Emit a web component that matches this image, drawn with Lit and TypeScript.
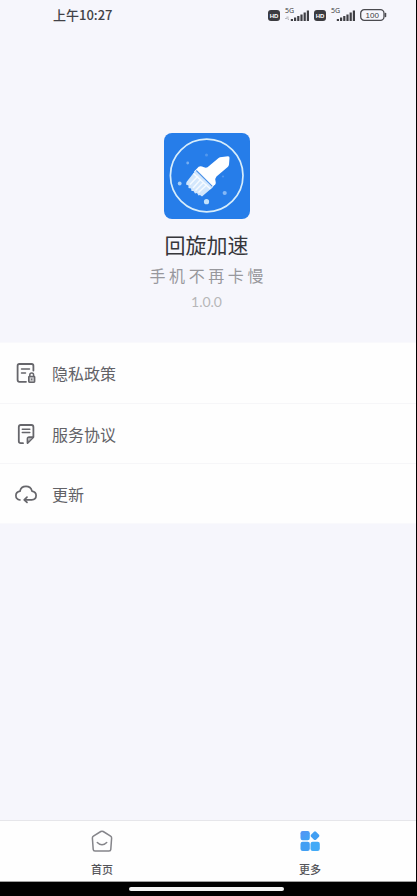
import { LitElement, html, css, svg } from "lit";
import { customElement } from "lit/decorators.js";

const hdBadge = html`
  <svg class="hd" viewBox="0 0 12 11" aria-label="HD">
    <rect width="12" height="11" rx="3" fill="#3b3b40" />
    <text x="6" y="8" text-anchor="middle" class="hd-text">HD</text>
  </svg>`;

const signalBars = (data: boolean) => html`
  <svg class="signal" viewBox="0 -3 24 20" aria-label="5G">
    <text x="0" y="5" class="net-text">5G</text>
    ${data
      ? svg`<path d="M0 10.500h2v-2M3 8.500v3h1" fill="none" stroke="#b5b5bb" stroke-width="0.900" />`
      : null}
    <path
      d="M6.900 13v-2M10.100 13v-3.500M13.300 13V8M16.500 13V6.500M19.700 13V4.500M22.900 13V2.500"
      fill="none" stroke="#3e3e43" stroke-width="2.200" />
  </svg>`;

const battery = html`
  <svg class="battery" viewBox="0 0 27 12" aria-label="100%">
    <rect x="0.700" y="0.700" width="23.300" height="10.600" rx="3.600" fill="none" stroke="#4a4a4f" stroke-width="1.300" />
    <path d="M25.500 4.500v3" stroke="#4a4a4f" stroke-width="1.500" stroke-linecap="round" />
    <text x="12.300" y="9" text-anchor="middle" class="battery-text">100</text>
  </svg>`;

const logo = html`
  <svg class="logo" viewBox="0 0 86 86" aria-hidden="true">
    <rect width="86" height="86" rx="8" fill="#267de9" />
    <circle cx="42.700" cy="42.500" r="36.300" fill="none" stroke="#d7edfb" stroke-width="1.700" />
    <path
      d="M56 24.200 64 23.300Q65.800 23.300 65.500 25L65 31.500Q64.700 33 63.700 34L52.500 43.500Q50.500 46 51.500 48Q52.500 51 50 52.500L47.500 55.500 30 38.500 33 35.500Q35 32.500 38 33.500L40 34.300Q43 35.500 45 33L54 25.500Q55 24.400 56 24.200Z"
      fill="#fff" />
    <path d="M31.500 37.500 48.500 54.500 38 63.500 36 62 34.500 62.500 33 60 31 60.500 29.500 58 27.500 58 27 55.500 24.500 55 24.500 52.500 22 51.500 22.500 49Z" fill="#d3e7fc" />
    <path d="M29.500 40.500 46.500 56M34 43 26 51.500M37 46 29 55M40 49 31.500 57.500M43 51.500 34.500 59.500" fill="none" stroke="#f5faff" stroke-width="1.500" />
    <path d="M32.300 37.500 48.300 53.300" stroke="#4a91e8" stroke-width="1.100" />
    <circle cx="42.500" cy="68.700" r="2.600" fill="#c3e2fb" />
    <circle cx="60.700" cy="60" r="2.100" fill="#85b8f5" />
    <circle cx="15.700" cy="50.500" r="1.900" fill="#a5cef8" />
    <circle cx="23.700" cy="30" r="1.400" fill="#76aef2" />
    <circle cx="42.500" cy="22" r="1.500" fill="#5297ed" />
    <circle cx="59" cy="43.500" r="1.100" fill="#5297ed" />
  </svg>`;

const privacyIcon = html`
  <svg class="icon" viewBox="0 0 22 22" aria-hidden="true">
    <path d="M11 19.800H4.300Q2.600 19.800 2.600 18.100V3.700Q2.600 2 4.300 2H16.700Q18.400 2 18.400 3.700V8.500" fill="none" stroke="#66666b" stroke-width="1.800" stroke-linecap="round" />
    <path d="M6.500 7h8M6.500 11h4" stroke="#66666b" stroke-width="1.500" stroke-linecap="round" />
    <path d="M14.800 14.500v-1.600a1.900 1.900 0 0 1 3.800 0v1.600" fill="none" stroke="#66666b" stroke-width="1.500" />
    <rect x="13.800" y="14.500" width="5.800" height="5.700" rx="0.600" fill="#cfcfd1" stroke="#66666b" stroke-width="1.600" />
    <path d="M16.700 16.500v1.800" stroke="#66666b" stroke-width="1.200" />
  </svg>`;

const agreementIcon = html`
  <svg class="icon" viewBox="0 0 22 22" aria-hidden="true">
    <path d="M8 20.200H5.800Q3.800 20.200 3.800 18.200V4Q3.800 2 5.800 2H16.400Q18.400 2 18.400 4V14L12.500 20V15.800Q12.500 14.100 14.200 14.100H17.600" fill="none" stroke="#66666b" stroke-width="1.800" stroke-linecap="round" stroke-linejoin="round" />
    <path d="M13.500 15H17L13.500 18.500Z" fill="#b5b5b8" />
    <path d="M7.300 6.300h7.500M7.300 9.500h7.500" stroke="#66666b" stroke-width="1.500" stroke-linecap="round" />
  </svg>`;

const updateIcon = html`
  <svg class="icon" viewBox="0 0 22 22" aria-hidden="true">
    <path d="M5 17C2.700 16.700 .9 15 .9 12.600C.9 10.200 2.700 8.600 5 8.200C5.600 5.300 8 3.400 11 3.400C14 3.400 16.300 5.200 17 8.100C19.400 8.500 21.100 10.200 21.100 12.600C21.100 15 19.300 16.800 16.700 16.800H10" fill="none" stroke="#66666b" stroke-width="1.700" stroke-linecap="round" />
    <path d="M12 14.200 9.200 16.800 12 19.400" fill="none" stroke="#66666b" stroke-width="1.700" stroke-linecap="round" stroke-linejoin="round" />
  </svg>`;

const homeIcon = html`
  <svg class="icon" viewBox="0 0 22 22" aria-hidden="true">
    <path d="M9.800 1.500Q11 .8 12.200 1.500L19.600 6.100Q20.700 6.800 20.600 8.200L19.800 19.400Q19.700 21 18 21H4Q2.300 21 2.200 19.400L1.400 8.200Q1.300 6.800 2.400 6.100Z" fill="none" stroke="#85858a" stroke-width="1.500" />
    <path d="M6.300 12.500Q11 17 15.700 12.500" fill="none" stroke="#85858a" stroke-width="1.500" stroke-linecap="round" />
  </svg>`;

const moreIcon = html`
  <svg class="icon" viewBox="0 0 22 22" aria-hidden="true">
    <defs>
      <linearGradient id="tile" x1="0" y1="0" x2="1" y2="1">
        <stop offset="0" stop-color="#5792f3" />
        <stop offset="1" stop-color="#3ea6f6" />
      </linearGradient>
    </defs>
    <rect x="1.500" y="1" width="9.300" height="9.300" rx="2.200" fill="url(#tile)" />
    <path d="M15 1.700Q16 .9 17 1.700L20 4.700Q20.800 5.700 20 6.700L17 9.700Q16 10.500 15 9.700L12 6.700Q11.200 5.700 12 4.700Z" fill="#429ff3" />
    <rect x="1.500" y="11.700" width="9.300" height="9.300" rx="2.200" fill="#429ff3" />
    <rect x="11.500" y="11.700" width="9.300" height="9.300" rx="2.200" fill="#42aaf7" />
  </svg>`;

const menu = [
  { label: "隐私政策", icon: privacyIcon },
  { label: "服务协议", icon: agreementIcon },
  { label: "更新", icon: updateIcon },
];

@customElement("app-root")
export class AppRoot extends LitElement {
  static styles = css`
    :host {
      display: flex;
      flex-direction: column;
      box-sizing: border-box;
      min-height: 100vh;
      background: #f6f6fc;
      border-right: 1px solid #000;
      font-family: "Noto Sans CJK SC", sans-serif;
    }
    svg { display: block; flex: none; }
    .status {
      display: flex;
      justify-content: space-between;
      align-items: center;
      height: 30px;
      padding: 0 29px 0 53px;
      color: #424247;
      font-size: 13px;
      font-weight: 500;
      line-height: 30px;
    }
    .indicators { display: flex; align-items: center; gap: 5px; }
    .hd { width: 12px; height: 11px; }
    .hd-text { font: 700 6px "Liberation Sans", sans-serif; fill: #fff; }
    .signal { width: 24px; height: 20px; overflow: visible; }
    .net-text { font: 7px "Noto Sans", sans-serif; fill: #3e3e43; }
    .battery { width: 27px; height: 12px; }
    .battery-text { font: 8px "Liberation Sans", sans-serif; fill: #3c3c41; }
    .about {
      display: flex;
      flex-direction: column;
      align-items: center;
      padding: 103px 3px 29px 0;
    }
    .about > * { margin: 0; }
    .logo { width: 86px; height: 86px; }
    .name {
      padding-top: 10px;
      color: #36363b;
      font-size: 21px;
      font-weight: 400;
      line-height: 30px;
    }
    .slogan { color: #98989d; font-size: 16px; line-height: 32px; }
    .version {
      color: #b6b6b8;
      font-family: Lato, sans-serif;
      font-size: 14px;
      line-height: 22px;
    }
    .menu {
      margin: 0;
      padding: 0;
      list-style: none;
      background: #fefefe;
      border: 1px solid #f9f9fc;
      border-width: 1px 0;
    }
    .menu li + li { border-top: 1px solid #f6f6f8; }
    .menu li { box-sizing: border-box; height: 60px; }
    .row {
      display: flex;
      align-items: center;
      gap: 15px;
      width: 100%;
      height: 100%;
      padding: 0 15px;
      border: 0;
      background: none;
      color: #626267;
      font: inherit;
      font-size: 16px;
      text-align: left;
    }
    .icon { width: 22px; height: 22px; }
    .tabs {
      display: flex;
      margin-top: auto;
      background: #fefefe;
      border-top: 1px solid #e6e6ea;
      border-bottom: 1px solid #a0a0a0;
    }
    .tab {
      flex: 1;
      display: flex;
      flex-direction: column;
      align-items: center;
      gap: 8px;
      padding: 9px 4px 3px 0;
      color: #55555a;
      font-size: 11px;
      font-weight: 500;
      line-height: 18px;
      text-decoration: none;
    }
    .gesture {
      display: flex;
      justify-content: center;
      align-items: center;
      height: 14px;
      padding-right: 3px;
      background: #000;
    }
    .handle { width: 155px; height: 4px; border-radius: 2px; background: #f4f4f4; }
  `;

  render() {
    return html`
      <header class="status">
        <span>上午10:27</span>
        <div class="indicators">
          ${hdBadge}${signalBars(true)}${hdBadge}${signalBars(false)}${battery}
        </div>
      </header>
      <section class="about">
        ${logo}
        <h1 class="name">回旋加速</h1>
        <p class="slogan">手 机 不 再 卡 慢</p>
        <p class="version">1.0.0</p>
      </section>
      <ul class="menu">
        ${menu.map(
          (item) => html`<li><button class="row" type="button">${item.icon}<span>${item.label}</span></button></li>`
        )}
      </ul>
      <nav class="tabs">
        <a class="tab" href="#home">${homeIcon}<span>首页</span></a>
        <a class="tab" href="#more" aria-current="page">${moreIcon}<span>更多</span></a>
      </nav>
      <div class="gesture"><div class="handle"></div></div>
    `;
  }
}
